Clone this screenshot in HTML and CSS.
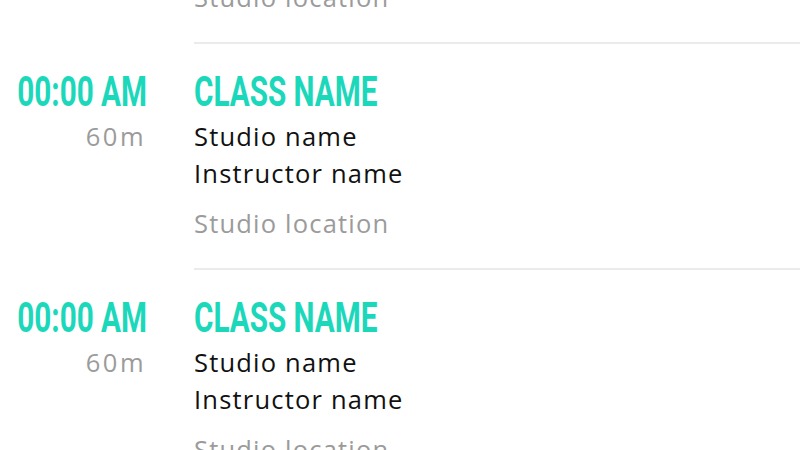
FILE: index.html
```html
<!DOCTYPE html>
<html lang="en">
<head>
    <meta charset="UTF-8">
    <title>Class Schedule</title>
    <link rel="stylesheet" href="styles.css">
</head>
<body>
    <div class="schedule">
        <div class="row">
            <div class="when">
                <div class="time">00:00 AM</div>
                <div class="length">60m</div>
            </div>
            <div class="info">
                <div class="class-name">CLASS NAME</div>
                <div class="studio">Studio name</div>
                <div class="instructor">Instructor name</div>
                <div class="location">Studio location</div>
            </div>
        </div>
        <div class="row">
            <div class="when">
                <div class="time">00:00 AM</div>
                <div class="length">60m</div>
            </div>
            <div class="info">
                <div class="class-name">CLASS NAME</div>
                <div class="studio">Studio name</div>
                <div class="instructor">Instructor name</div>
                <div class="location">Studio location</div>
            </div>
        </div>
        <div class="row">
            <div class="when">
                <div class="time">00:00 AM</div>
                <div class="length">60m</div>
            </div>
            <div class="info">
                <div class="class-name">CLASS NAME</div>
                <div class="studio">Studio name</div>
                <div class="instructor">Instructor name</div>
                <div class="location">Studio location</div>
            </div>
        </div>
    </div>
</body>
</html>
```

FILE: styles.css
```css
body { margin: 0; background: #fff; font-family: "Open Sans", sans-serif; overflow: hidden; height: 450px; }
.schedule { margin-top: -184px; }
.row { display: flex; }
.when { width: 147px; flex: none; display: flex; flex-direction: column; align-items: flex-end; padding-top: 27px; }
.info { flex: 1; margin-left: 47px; padding-top: 25px; padding-bottom: 26px; border-top: 2px solid #ebebeb; }
.time, .class-name { font-family: "Roboto", sans-serif; font-weight: bold; font-size: 43px; line-height: 44px; color: #1bd8bb; white-space: nowrap; transform: scaleX(0.69); }
.time { transform-origin: right center; }
.class-name { transform-origin: left center; }
.length { font-size: 25.5px; line-height: 37px; margin-top: 5px; color: #9b9b9b; letter-spacing: 2.5px; padding-right: 1px; }
.studio, .instructor, .location { font-size: 25.5px; line-height: 37px; letter-spacing: 1.2px; }
.studio, .instructor { color: #111; }
.studio { margin-top: 5px; }
.location { margin-top: 13px; color: #9b9b9b; }
```
